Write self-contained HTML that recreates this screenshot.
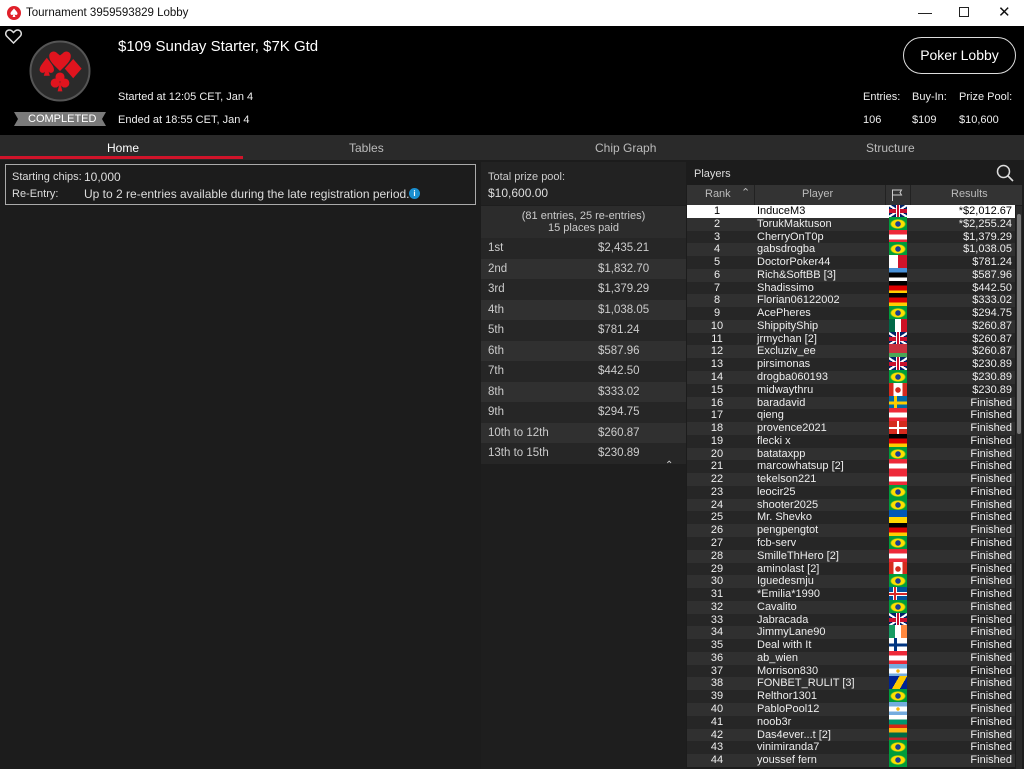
<!DOCTYPE html>
<html><head><meta charset="utf-8"><style>
*{margin:0;padding:0;box-sizing:border-box}
body{width:1024px;height:769px;overflow:hidden;background:#1c1c1c;font-family:"Liberation Sans",Arial,sans-serif;color:#ddd;position:relative}
.abs{position:absolute}
#title{left:0;top:0;width:1024px;height:26px;background:#fff;color:#111;font-size:11.5px}
#hdr{left:0;top:26px;width:1024px;height:109px;background:#000;color:#eee}
#tabs{left:0;top:135px;width:1024px;height:25px;background:#2a2a2a;font-size:12px;color:#bbb}
.tab{position:absolute;top:6px}
#info{left:5px;top:164px;width:471px;height:41px;border:1px solid #aaa;font-size:12px;color:#ddd}
#mid{left:481px;top:162px;width:205px;height:607px;background:#1e1e1e}
.prow{position:absolute;left:0;width:205px;height:20.5px;font-size:11.5px;color:#ccc;line-height:20px}
.prow span{position:absolute}
#right{left:687px;top:162px;width:337px;height:607px;background:#1c1c1c}
.r{position:absolute;left:0;width:328px;height:12.77px;font-size:11px;line-height:12.8px;color:#eee}
.r .n{position:absolute;left:0;width:60px;text-align:center}
.r .p{position:absolute;left:70px}
.r .v{position:absolute;right:3px}
.r i{position:absolute;left:202px;top:-1px;width:18px;height:14px;display:block}
.a{background:#262626}.b{background:#303030}
.uk{background:linear-gradient(90deg,transparent 7px,#fff 7px,#fff 11px,transparent 11px),linear-gradient(transparent 5px,#c8102e 5px,#c8102e 9px,transparent 9px),linear-gradient(33deg,transparent 45%,#fff 45%,#fff 55%,transparent 55%),linear-gradient(-33deg,transparent 45%,#fff 45%,#fff 55%,transparent 55%),#012169}
.uk::after{content:"";position:absolute;left:8px;top:0;width:2px;height:14px;background:#c8102e}
.br{background:radial-gradient(circle,#1b3e94 2.5px,transparent 3px),radial-gradient(ellipse 8px 5px,#fedf00 80%,transparent 100%),#009c3b}
.at{background:linear-gradient(#ed2939 33%,#fff 33%,#fff 67%,#ed2939 67%)}
.de{background:linear-gradient(#000 33%,#dd0000 33%,#dd0000 67%,#ffce00 67%)}
.mt{background:linear-gradient(90deg,#fff 50%,#cf142b 50%)}
.ee{background:linear-gradient(#4891d9 33%,#000 33%,#000 67%,#fff 67%)}
.mx{background:linear-gradient(90deg,#006847 33%,#fff 33%,#fff 67%,#ce1126 67%)}
.ca{background:radial-gradient(circle,#d52b1e 2.5px,transparent 3px),linear-gradient(90deg,#d52b1e 25%,#fff 25%,#fff 75%,#d52b1e 75%)}
.se{background:linear-gradient(90deg,transparent 5px,#fecc00 5px,#fecc00 8px,transparent 8px),linear-gradient(#006aa7 5.5px,#fecc00 5.5px,#fecc00 8.5px,#006aa7 8.5px)}
.ch{background:linear-gradient(90deg,transparent 8px,#fff 8px,#fff 10px,transparent 10px),linear-gradient(transparent 6px,#fff 6px,#fff 8px,transparent 8px),#d52b1e}
.ua{background:linear-gradient(#0057b7 50%,#ffd700 50%)}
.is{background:linear-gradient(90deg,transparent 5px,#d72828 5px,#d72828 7px,transparent 7px),linear-gradient(transparent 6px,#d72828 6px,#d72828 8px,transparent 8px),linear-gradient(90deg,transparent 4px,#fff 4px,#fff 8px,transparent 8px),linear-gradient(transparent 5px,#fff 5px,#fff 9px,transparent 9px),#02529c}
.ie{background:linear-gradient(90deg,#169b62 33%,#fff 33%,#fff 67%,#ff883e 67%)}
.fi{background:linear-gradient(90deg,transparent 5px,#003580 5px,#003580 8px,transparent 8px),linear-gradient(#fff 5.5px,#003580 5.5px,#003580 8.5px,#fff 8.5px)}
.ar{background:radial-gradient(circle,#f6b40e 1.5px,transparent 2px),linear-gradient(#74acdf 33%,#fff 33%,#fff 67%,#74acdf 67%)}
.ba{background:linear-gradient(120deg,#002395 40%,#fecb00 40%,#fecb00 70%,#002395 70%)}
.bg{background:linear-gradient(#fff 33%,#00966e 33%,#00966e 67%,#d62612 67%)}
.lt{background:linear-gradient(#fdb913 33%,#006a44 33%,#006a44 67%,#c1272d 67%)}
.by{background:linear-gradient(#c8313e 66%,#4aa657 66%)}
</style></head><body>

<div id="title" class="abs">
  <svg class="abs" style="left:7px;top:6px" width="14" height="14" viewBox="0 0 14 14"><circle cx="7" cy="7" r="7" fill="#e0202a"/><path d="M7 2.5C5 5 3.5 6 3.5 7.6 3.5 9 5.5 9.5 6.4 8.3L5.6 11h2.8L7.6 8.3C8.5 9.5 10.5 9 10.5 7.6 10.5 6 9 5 7 2.5Z" fill="#fff"/></svg>
  <span class="abs" style="left:26px;top:7px">Tournament 3959593829 Lobby</span>
  <span class="abs" style="left:918px;top:4px;font-size:14px">&#8212;</span>
  <span class="abs" style="left:959px;top:7px;width:10px;height:10px;border:1.2px solid #222"></span>
  <span class="abs" style="left:998px;top:3px;font-size:15px">&#10005;</span>
</div>

<div id="hdr" class="abs">
  <svg class="abs" style="left:5px;top:3px" width="17" height="15" viewBox="0 0 17 15"><path d="M8.5 14L2 7.5C-0.5 5 1 1 4.5 1 6.5 1 7.5 2.5 8.5 3.5 9.5 2.5 10.5 1 12.5 1 16 1 17.5 5 15 7.5Z" fill="none" stroke="#ddd" stroke-width="1.5"/></svg>
  <svg class="abs" style="left:29px;top:14px" width="62" height="62" viewBox="0 0 62 62"><circle cx="31" cy="31" r="29.5" fill="#2b2b2b" stroke="#555" stroke-width="2"/>
   <g transform="translate(31 31) scale(1.2) translate(-31 -31)">
   <path d="M31 31C26 26 22 23 22 18.5 22 15 26 13.5 28.5 16 29.5 17 31 18 31 18S32.5 17 33.5 16C36 13.5 40 15 40 18.5 40 23 36 26 31 31Z" fill="#e0141e"/>
   <path d="M20 20C23 24 26 27 26 30 26 32.5 23 33.5 21.5 31.5L22.5 35h-5l1-3.5C17 33.5 14 32.5 14 30 14 27 17 24 20 20Z" fill="#e0141e"/>
   <path d="M42 21L49 29 42 37 35 29Z" fill="#e0141e"/>
   <circle cx="31" cy="36" r="3.8" fill="#e0141e"/><circle cx="27" cy="41" r="3.8" fill="#e0141e"/><circle cx="35" cy="41" r="3.8" fill="#e0141e"/><path d="M31 40L29 48h4Z" fill="#e0141e"/></g></svg>
  <svg class="abs" style="left:14px;top:86px" width="92" height="14" viewBox="0 0 92 14"><path d="M0 0H92L88 7 92 14H0L4 7Z" fill="#7a7a7a"/></svg>
  <span class="abs" style="left:28px;top:87px;font-size:11px;color:#fff">COMPLETED</span>
  <span class="abs" style="left:118px;top:12px;font-size:15px;color:#fff">$109 Sunday Starter, $7K Gtd</span>
  <span class="abs" style="left:118px;top:65px;font-size:11px">Started at 12:05 CET, Jan 4</span>
  <span class="abs" style="left:118px;top:88px;font-size:11px">Ended at 18:55 CET, Jan 4</span>
  <div class="abs" style="left:903px;top:11px;width:113px;height:37px;border:1px solid #ddd;border-radius:19px;text-align:center;line-height:35px;font-size:14px;color:#fff">Poker Lobby</div>
  <span class="abs" style="left:863px;top:65px;font-size:11px">Entries:</span>
  <span class="abs" style="left:912px;top:65px;font-size:11px">Buy-In:</span>
  <span class="abs" style="left:959px;top:65px;font-size:11px">Prize Pool:</span>
  <span class="abs" style="left:863px;top:88px;font-size:11px">106</span>
  <span class="abs" style="left:912px;top:88px;font-size:11px">$109</span>
  <span class="abs" style="left:959px;top:88px;font-size:11px">$10,600</span>
</div>

<div id="tabs" class="abs">
  <span class="tab" style="left:107px;color:#fff">Home</span>
  <div class="abs" style="left:0;top:21px;width:243px;height:3px;background:#d0142a"></div>
  <span class="tab" style="left:349px">Tables</span>
  <span class="tab" style="left:595px">Chip Graph</span>
  <span class="tab" style="left:866px">Structure</span>
</div>

<div id="info" class="abs">
  <span class="abs" style="left:6px;top:6px;font-size:11px">Starting chips:</span>
  <span class="abs" style="left:78px;top:5px">10,000</span>
  <span class="abs" style="left:6px;top:23px;font-size:11px">Re-Entry:</span>
  <span class="abs" style="left:78px;top:22px">Up to 2 re-entries available during the late registration period.</span>
  <span class="abs" style="left:403px;top:23px;width:11px;height:11px;border-radius:50%;background:#1a8fd0;color:#fff;font-size:8px;text-align:center;line-height:11px;font-weight:bold">i</span>
</div>

<div id="mid" class="abs">
  <div class="abs" style="left:0;top:0;width:205px;height:43px;background:#222"><span class="abs" style="left:7px;top:9px;font-size:11px;color:#ccc">Total prize pool:</span><span class="abs" style="left:7px;top:24px;font-size:12px;color:#ddd">$10,600.00</span></div>
  <div class="abs" style="left:0;top:44px;width:205px;height:32px;background:#2c2c2c;text-align:center;font-size:11px;color:#ccc;padding-top:4px;line-height:12px">(81 entries, 25 re-entries)<br>15 places paid</div>
  <div class="prow a" style="top:76px"><span style="left:7px">1st</span><span style="left:117px">$2,435.21</span></div>
  <div class="prow b" style="top:96.5px"><span style="left:7px">2nd</span><span style="left:117px">$1,832.70</span></div>
  <div class="prow a" style="top:117px"><span style="left:7px">3rd</span><span style="left:117px">$1,379.29</span></div>
  <div class="prow b" style="top:137.5px"><span style="left:7px">4th</span><span style="left:117px">$1,038.05</span></div>
  <div class="prow a" style="top:158px"><span style="left:7px">5th</span><span style="left:117px">$781.24</span></div>
  <div class="prow b" style="top:178.5px"><span style="left:7px">6th</span><span style="left:117px">$587.96</span></div>
  <div class="prow a" style="top:199px"><span style="left:7px">7th</span><span style="left:117px">$442.50</span></div>
  <div class="prow b" style="top:219.5px"><span style="left:7px">8th</span><span style="left:117px">$333.02</span></div>
  <div class="prow a" style="top:240px"><span style="left:7px">9th</span><span style="left:117px">$294.75</span></div>
  <div class="prow b" style="top:260.5px"><span style="left:7px">10th to 12th</span><span style="left:117px">$260.87</span></div>
  <div class="prow a" style="top:281px"><span style="left:7px">13th to 15th</span><span style="left:117px">$230.89</span></div>
  <span class="abs" style="left:184px;top:298px;font-size:10px;color:#ccc">&#8963;</span>
</div>

<div id="right" class="abs">
  <span class="abs" style="left:7px;top:6px;font-size:11px;color:#ddd">Players</span>
  <svg class="abs" style="left:309px;top:2px" width="18" height="18" viewBox="0 0 18 18"><circle cx="7.5" cy="7.5" r="6" fill="none" stroke="#ddd" stroke-width="1.5"/><path d="M12 12L17 17" stroke="#ddd" stroke-width="1.6"/></svg>
  <div class="abs" style="left:0;top:23px;width:335px;height:20px;background:#333;font-size:11px;color:#bbb;line-height:19px">
    <span class="abs" style="left:18px">Rank</span><span class="abs" style="left:54px;top:-1px">&#8963;</span>
    <span class="abs" style="left:67px;top:0;width:1px;height:20px;background:#222"></span>
    <span class="abs" style="left:115px">Player</span>
    <span class="abs" style="left:198px;top:0;width:1px;height:20px;background:#222"></span>
    <svg class="abs" style="left:204px;top:4px" width="12" height="12" viewBox="0 0 12 12"><path d="M1.5 12V1H10.5L9 3.5 10.5 6H1.5" fill="none" stroke="#ccc" stroke-width="1"/></svg>
    <span class="abs" style="left:223px;top:0;width:1px;height:20px;background:#222"></span>
    <span class="abs" style="left:264px">Results</span>
  </div>
  <div class="abs" style="left:329px;top:44px;width:6px;height:563px;background:#2a2a2a"></div>
  <div class="abs" style="left:330px;top:52px;width:4px;height:220px;background:#777;border-radius:2px"></div>
  <div class="abs" style="left:0;top:43px;width:328px;height:564px;overflow:hidden">
<div class="r" style="top:0;background:#fff;color:#000"><span class="n">1</span><span class="p">InduceM3</span><i class="uk"></i><span class="v">*$2,012.67</span></div>
<div class="r b" style="top:12.77px"><span class="n">2</span><span class="p">TorukMaktuson</span><i class="br"></i><span class="v">*$2,255.24</span></div>
<div class="r a" style="top:25.54px"><span class="n">3</span><span class="p">CherryOnT0p</span><i class="at"></i><span class="v">$1,379.29</span></div>
<div class="r b" style="top:38.31px"><span class="n">4</span><span class="p">gabsdrogba</span><i class="br"></i><span class="v">$1,038.05</span></div>
<div class="r a" style="top:51.08px"><span class="n">5</span><span class="p">DoctorPoker44</span><i class="mt"></i><span class="v">$781.24</span></div>
<div class="r b" style="top:63.85px"><span class="n">6</span><span class="p">Rich&amp;SoftBB [3]</span><i class="ee"></i><span class="v">$587.96</span></div>
<div class="r a" style="top:76.62px"><span class="n">7</span><span class="p">Shadissimo</span><i class="de"></i><span class="v">$442.50</span></div>
<div class="r b" style="top:89.39px"><span class="n">8</span><span class="p">Florian06122002</span><i class="de"></i><span class="v">$333.02</span></div>
<div class="r a" style="top:102.16px"><span class="n">9</span><span class="p">AcePheres</span><i class="br"></i><span class="v">$294.75</span></div>
<div class="r b" style="top:114.93px"><span class="n">10</span><span class="p">ShippityShip</span><i class="mx"></i><span class="v">$260.87</span></div>
<div class="r a" style="top:127.7px"><span class="n">11</span><span class="p">jrmychan [2]</span><i class="uk"></i><span class="v">$260.87</span></div>
<div class="r b" style="top:140.47px"><span class="n">12</span><span class="p">Excluziv_ee</span><i class="by"></i><span class="v">$260.87</span></div>
<div class="r a" style="top:153.24px"><span class="n">13</span><span class="p">pirsimonas</span><i class="uk"></i><span class="v">$230.89</span></div>
<div class="r b" style="top:166.01px"><span class="n">14</span><span class="p">drogba060193</span><i class="br"></i><span class="v">$230.89</span></div>
<div class="r a" style="top:178.78px"><span class="n">15</span><span class="p">midwaythru</span><i class="ca"></i><span class="v">$230.89</span></div>
<div class="r b" style="top:191.55px"><span class="n">16</span><span class="p">baradavid</span><i class="se"></i><span class="v">Finished</span></div>
<div class="r a" style="top:204.32px"><span class="n">17</span><span class="p">qieng</span><i class="at"></i><span class="v">Finished</span></div>
<div class="r b" style="top:217.09px"><span class="n">18</span><span class="p">provence2021</span><i class="ch"></i><span class="v">Finished</span></div>
<div class="r a" style="top:229.86px"><span class="n">19</span><span class="p">flecki x</span><i class="de"></i><span class="v">Finished</span></div>
<div class="r b" style="top:242.63px"><span class="n">20</span><span class="p">batataxpp</span><i class="br"></i><span class="v">Finished</span></div>
<div class="r a" style="top:255.4px"><span class="n">21</span><span class="p">marcowhatsup [2]</span><i class="at"></i><span class="v">Finished</span></div>
<div class="r b" style="top:268.17px"><span class="n">22</span><span class="p">tekelson221</span><i class="at"></i><span class="v">Finished</span></div>
<div class="r a" style="top:280.94px"><span class="n">23</span><span class="p">leocir25</span><i class="br"></i><span class="v">Finished</span></div>
<div class="r b" style="top:293.71px"><span class="n">24</span><span class="p">shooter2025</span><i class="br"></i><span class="v">Finished</span></div>
<div class="r a" style="top:306.48px"><span class="n">25</span><span class="p">Mr. Shevko</span><i class="ua"></i><span class="v">Finished</span></div>
<div class="r b" style="top:319.25px"><span class="n">26</span><span class="p">pengpengtot</span><i class="de"></i><span class="v">Finished</span></div>
<div class="r a" style="top:332.02px"><span class="n">27</span><span class="p">fcb-serv</span><i class="br"></i><span class="v">Finished</span></div>
<div class="r b" style="top:344.79px"><span class="n">28</span><span class="p">SmilleThHero [2]</span><i class="at"></i><span class="v">Finished</span></div>
<div class="r a" style="top:357.56px"><span class="n">29</span><span class="p">aminolast [2]</span><i class="ca"></i><span class="v">Finished</span></div>
<div class="r b" style="top:370.33px"><span class="n">30</span><span class="p">Iguedesmju</span><i class="br"></i><span class="v">Finished</span></div>
<div class="r a" style="top:383.1px"><span class="n">31</span><span class="p">*Emilia*1990</span><i class="is"></i><span class="v">Finished</span></div>
<div class="r b" style="top:395.87px"><span class="n">32</span><span class="p">Cavalito</span><i class="br"></i><span class="v">Finished</span></div>
<div class="r a" style="top:408.64px"><span class="n">33</span><span class="p">Jabracada</span><i class="uk"></i><span class="v">Finished</span></div>
<div class="r b" style="top:421.41px"><span class="n">34</span><span class="p">JimmyLane90</span><i class="ie"></i><span class="v">Finished</span></div>
<div class="r a" style="top:434.18px"><span class="n">35</span><span class="p">Deal with It</span><i class="fi"></i><span class="v">Finished</span></div>
<div class="r b" style="top:446.95px"><span class="n">36</span><span class="p">ab_wien</span><i class="at"></i><span class="v">Finished</span></div>
<div class="r a" style="top:459.72px"><span class="n">37</span><span class="p">Morrison830</span><i class="ar"></i><span class="v">Finished</span></div>
<div class="r b" style="top:472.49px"><span class="n">38</span><span class="p">FONBET_RULIT [3]</span><i class="ba"></i><span class="v">Finished</span></div>
<div class="r a" style="top:485.26px"><span class="n">39</span><span class="p">Relthor1301</span><i class="br"></i><span class="v">Finished</span></div>
<div class="r b" style="top:498.03px"><span class="n">40</span><span class="p">PabloPool12</span><i class="ar"></i><span class="v">Finished</span></div>
<div class="r a" style="top:510.8px"><span class="n">41</span><span class="p">noob3r</span><i class="bg"></i><span class="v">Finished</span></div>
<div class="r b" style="top:523.57px"><span class="n">42</span><span class="p">Das4ever...t [2]</span><i class="lt"></i><span class="v">Finished</span></div>
<div class="r a" style="top:536.34px"><span class="n">43</span><span class="p">vinimiranda7</span><i class="br"></i><span class="v">Finished</span></div>
<div class="r b" style="top:549.11px"><span class="n">44</span><span class="p">youssef fern</span><i class="br"></i><span class="v">Finished</span></div>
  </div>
</div>
</body></html>
